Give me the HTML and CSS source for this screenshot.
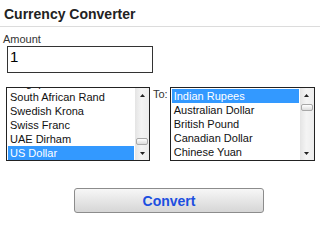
FILE: index.html
```html
<!DOCTYPE html>
<html>
<head>
<meta charset="utf-8">
<link rel="stylesheet" href="styles.css">
</head>
<body>
<div class="converter">
  <h1 class="title">Currency Converter</h1>
  <label class="amount-label" for="amount">Amount</label>
  <input class="amount-input" id="amount" type="text" value="1">
  <div class="lists">
    <div class="listbox listbox-from">
      <div class="list-view">
        <ul class="items items-from">
          <li>Singapore Dollar</li>
          <li>South African Rand</li>
          <li>Swedish Krona</li>
          <li>Swiss Franc</li>
          <li>UAE Dirham</li>
          <li class="selected">US Dollar</li>
        </ul>
      </div>
      <div class="scrollbar">
        <div class="arrow"><svg width="5" height="3" viewBox="0 0 5 3"><polygon points="2.5,0 5,3 0,3" fill="#222"/></svg></div>
        <div class="track track-end"><div class="thumb"></div></div>
        <div class="arrow"><svg width="5" height="3" viewBox="0 0 5 3"><polygon points="0,0 5,0 2.5,3" fill="#222"/></svg></div>
      </div>
    </div>
    <span class="to-label">To:</span>
    <div class="listbox listbox-to">
      <div class="list-view">
        <ul class="items items-to">
          <li class="selected">Indian Rupees</li>
          <li>Australian Dollar</li>
          <li>British Pound</li>
          <li>Canadian Dollar</li>
          <li>Chinese Yuan</li>
        </ul>
      </div>
      <div class="scrollbar">
        <div class="arrow"><svg width="5" height="3" viewBox="0 0 5 3"><polygon points="2.5,0 5,3 0,3" fill="#222"/></svg></div>
        <div class="track track-start"><div class="thumb"></div></div>
        <div class="arrow"><svg width="5" height="3" viewBox="0 0 5 3"><polygon points="0,0 5,0 2.5,3" fill="#222"/></svg></div>
      </div>
    </div>
  </div>
  <button class="convert" type="button">Convert</button>
</div>
</body>
</html>
```
FILE: styles.css
```css
html, body {
  margin: 0;
  padding: 0;
  background: #ffffff;
}

.converter {
  width: 320px;
  font-family: "Liberation Sans", Arial, sans-serif;
  color: #222;
}

.title {
  margin: 0;
  padding: 6px 0 4px 4px;
  font-size: 14px;
  line-height: 16px;
  font-weight: bold;
  color: #222;
  border-bottom: 1px solid #dcdcdc;
}

.amount-label {
  display: block;
  margin: 6px 0 0 3px;
  font-size: 11px;
  line-height: 13px;
  color: #333;
}

.amount-input {
  display: block;
  box-sizing: border-box;
  margin: 0 0 0 7px;
  width: 146px;
  height: 27px;
  padding: 0 2px 7px 2px;
  border: 1px solid #333;
  font-family: "Liberation Sans", Arial, sans-serif;
  font-size: 15px;
  color: #000;
  background: #fff;
  outline: none;
}

.lists {
  display: flex;
  align-items: flex-start;
  margin: 14px 0 0 6px;
}

.listbox {
  display: flex;
  box-sizing: border-box;
  height: 74px;
  border: 1px solid #222;
  background: #fff;
}

.listbox-from {
  width: 144px;
}

.listbox-to {
  width: 145px;
}

.list-view {
  flex: 1;
  overflow: hidden;
  padding: 0 1px;
}

.items {
  list-style: none;
  margin: 0;
  padding: 0;
  font-size: 11px;
  line-height: 14px;
  color: #111;
}

.items li {
  padding-left: 2px;
  white-space: nowrap;
}

.items-from {
  margin-top: -12px;
}

.items-to {
  margin-top: 1px;
}

.items li.selected {
  background: #3399ff;
  color: #fff;
}

.to-label {
  margin: 0 2px 0 3px;
  font-size: 11px;
  line-height: 14px;
  color: #333;
}

.scrollbar {
  display: flex;
  flex-direction: column;
  width: 14px;
  background: linear-gradient(to right, #e4e4e4, #f4f4f4 45%, #ededed);
}

.arrow {
  height: 14px;
  display: flex;
  align-items: center;
  justify-content: center;
}

.arrow svg {
  display: block;
}

.track {
  flex: 1;
  display: flex;
  flex-direction: column;
  align-items: center;
}

.track-start {
  justify-content: flex-start;
  padding-top: 2px;
}

.track-end {
  justify-content: flex-end;
  padding-bottom: 1px;
}

.thumb {
  box-sizing: border-box;
  width: 12px;
  height: 7px;
  border: 1px solid #a8a8a8;
  border-radius: 2px;
  background: linear-gradient(to bottom, #ffffff, #dcdcdc);
}

.convert {
  display: block;
  box-sizing: border-box;
  margin: 27px 0 0 74px;
  width: 190px;
  height: 25px;
  padding: 1px 0 0 0;
  border: 1px solid #8c8c8c;
  border-radius: 3px;
  background: linear-gradient(to bottom, #f7f7f7, #e6e6e6 50%, #d6d6d6);
  font-family: "Liberation Sans", Arial, sans-serif;
  font-size: 14px;
  font-weight: bold;
  color: #1c4fe0;
}
```
